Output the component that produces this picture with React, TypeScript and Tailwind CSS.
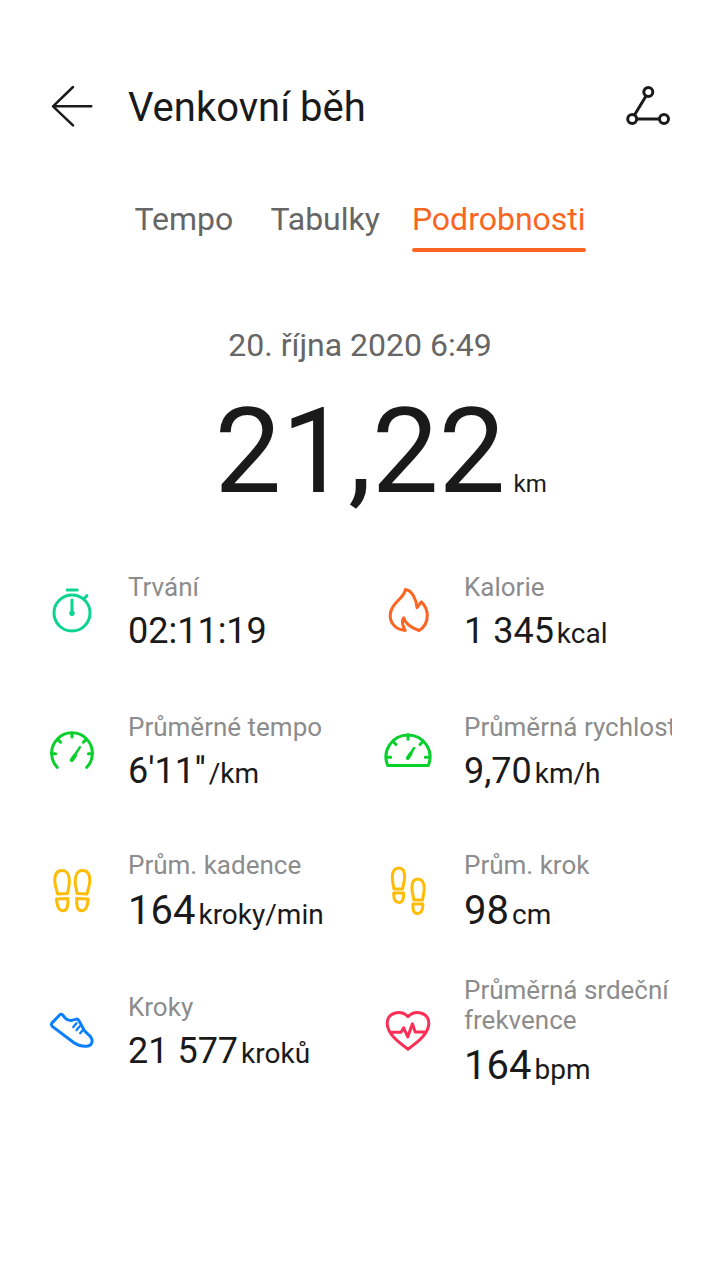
import React, { useState } from 'react';
import clsx from 'clsx';

interface IconProps {
  className?: string;
  children: React.ReactNode;
}

const Icon = ({ className, children }: IconProps) => (
  <svg
    viewBox="0 0 48 48"
    className={clsx('size-12 shrink-0 overflow-visible', className)}
    fill="none"
    stroke="currentColor"
    strokeWidth="3"
    strokeLinecap="round"
    strokeLinejoin="round"
    aria-hidden="true"
  >
    {children}
  </svg>
);

const StopwatchIcon = () => (
  <Icon className="text-[#0bd390]">
    <circle cx="24" cy="25" r="18" />
    <path d="M19.2 2h10M24 12v13M36.5 10.2l2.4-2.6" />
    <circle cx="24" cy="25.3" r="1.2" />
  </Icon>
);

const FlameIcon = () => (
  <Icon className="text-[#fb6522]">
    <path d="M21.3 1.6C21 10 6.2 15 6.2 27.5c0 8 6 14.4 15 14.9-2.7-4.8-4.2-8.9-1.6-12.6C21.6 36.5 28 40 35 42.5c6-3.5 8.5-10 8.3-16-.3-5.3-2.8-9.5-6-12.7L33 19.6C32.2 11 28 2.5 21.3 1.6z" />
  </Icon>
);

const PaceIcon = () => (
  <Icon className="text-[#07d02b]">
    <path d="M9.2 39.3A20.4 20.4 0 1 1 38.8 39.3" />
    <path d="M24 5.5V9M3.8 25.7h3.8M40.4 25.7h3.8M9.8 11.4l2.8 2.8M38.2 11.4l-2.8 2.8" />
    <path d="M31.9 19.2L23.7 32.2" strokeWidth="2.5" />
    <path d="M27 27.5L23.8 32" strokeWidth="4" />
  </Icon>
);

const SpeedIcon = () => (
  <Icon className="text-[#07d02b]">
    <path d="M3.8 37.6A22 22 0 1 1 44.2 37.6Z" />
    <path d="M24 6.5v4.8M2.5 29.3h4.2M41.3 29.3h4.2M8.7 13.2l3.3 3.3M39.3 13.2L36 16.5" />
    <path d="M30.1 20L23.8 30" strokeWidth="2.5" />
    <path d="M26.5 26L23.8 30" strokeWidth="4" />
  </Icon>
);

const CadenceIcon = () => (
  <Icon className="text-[#fdbc05]">
    <path d="M9.6 26C8.7 21 6.8 18.5 6.8 12.5 6.8 5.5 9.5 2.5 14 2.5s7.4 4 7.4 10.5c0 5.5-1.5 8.5-1.9 12.5z" />
    <path d="M8.5 31l11.4-.5c.3 7-.5 12.2-4.9 12.2S8.9 38.5 8.5 31z" />
    <path d="M39 26c.9-5 2.8-7.5 2.8-13.5 0-7-2.7-10-7.2-10S27.2 6.5 27.2 13c0 5.5 1.5 8.5 1.9 12.5z" />
    <path d="M40.1 31l-11.4-.5c-.3 7 .5 12.2 4.9 12.2s6.1-4.2 6.5-11.7z" />
  </Icon>
);

const StepIcon = () => (
  <Icon className="text-[#fdbc05]">
    <path d="M9.9 20.9C9.3 16 8.3 13.5 8.3 9.5 8.3 3 10.8 0 14.8 0s5.8 3.6 5.8 8.5c0 5-1.5 8-1.9 12.4z" />
    <path d="M9.6 24.9h10c.3 6-.9 9.6-4.6 9.6s-5.4-3.8-5.4-9.6z" />
    <path d="M38.6 32c.6-4.9 1.6-7.4 1.6-11.4 0-6.5-2.5-9.5-6.5-9.5s-5.8 3.6-5.8 8.5c0 5 1.5 8 1.9 12.4z" />
    <path d="M38.9 36h-10c-.3 6 .9 9.6 4.6 9.6s5.4-3.8 5.4-9.6z" />
  </Icon>
);

const ShoeIcon = () => (
  <Icon className="text-[#0a80ff]">
    <path d="M11.4 7.2L4.3 14.6c-1.4 1.5-1.2 2.7.3 4L25 34c4.5 3.4 9.5 4.6 14 4.300 5-.4 6.3-5.3 3.9-9-2-3-5-4.2-7-7.6l-4.8-8.8c-.8-1.6-2.1-2.1-3.7-1.5-4.1 1.5-7.8 1.3-10-1.2l-2.7-3.1c-1-1.1-2.2-1-3.3.1z" />
    <path d="M28.5 15.2L25.3 19M31.5 18.5L28.6 22M34.5 22.5L32.2 25.2" strokeWidth="2.4" />
  </Icon>
);

const HeartIcon = () => (
  <Icon className="text-[#fb2f57]">
    <path d="M24 41.2C16 35.3 3.2 26.5 3.2 15.3 3.2 5 16 1 24 8.6 32 1 44.8 5 44.8 15.3 44.8 26.5 32 35.3 24 41.2z" />
    <path d="M7 24.2h10l2.7-4.4 4.1 9.2 4.6-13.2 2.8 8.2H41" />
  </Icon>
);

const tabs = ['Tempo', 'Tabulky', 'Podrobnosti'];

const stats = [
  { label: 'Trvání', value: '02:11:19', unit: '', icon: <StopwatchIcon /> },
  { label: 'Kalorie', value: '1 345', unit: 'kcal', icon: <FlameIcon /> },
  { label: 'Průměrné tempo', value: "6'11''", unit: '/km', icon: <PaceIcon /> },
  { label: 'Průměrná rychlost', value: '9,70', unit: 'km/h', icon: <SpeedIcon /> },
  { label: 'Prům. kadence', value: '164', unit: 'kroky/min', icon: <CadenceIcon />, large: true },
  { label: 'Prům. krok', value: '98', unit: 'cm', icon: <StepIcon />, large: true },
  { label: 'Kroky', value: '21 577', unit: 'kroků', icon: <ShoeIcon /> },
  { label: 'Průměrná srdeční frekvence', value: '164', unit: 'bpm', icon: <HeartIcon />, large: true, wrap: true },
];

export default function App() {
  const [active, setActive] = useState('Podrobnosti');

  return (
    <div className="min-h-screen bg-white px-12 pt-[84px] pb-12 font-['Roboto',sans-serif] text-[#1a1a1a]">
      <header className="flex items-center gap-8">
        <button type="button" aria-label="Zpět" className="shrink-0">
          <Icon>
            <path d="M25 3L5 22.3 25 41.3M5 22.3H43.3" strokeWidth="2.5" />
          </Icon>
        </button>
        <h1 className="flex-1 text-[40px] leading-[48px]">Venkovní běh</h1>
        <button type="button" aria-label="Sdílet trasu" className="shrink-0">
          <Icon>
            <circle cx="24.3" cy="8" r="4.5" />
            <circle cx="8.2" cy="35" r="4.5" />
            <circle cx="40" cy="35" r="4.5" />
            <path d="M22 12L10.5 31M13 35h22" />
          </Icon>
        </button>
      </header>

      <nav className="mt-[67px] flex justify-center gap-8">
        {tabs.map((tab) => (
          <button
            key={tab}
            type="button"
            onClick={() => setActive(tab)}
            className={clsx(
              'flex min-w-[104px] flex-col items-start text-[32px] leading-10',
              tab === active ? 'text-[#fb6522]' : 'text-[#666666]'
            )}
          >
            {tab}
            <span className={clsx('mt-[9px] h-1 w-full rounded-full', tab === active && 'bg-[#fb6522]')} />
          </button>
        ))}
      </nav>

      <section className="mt-[73px]">
        <p className="text-center text-[32px] leading-10 text-[#666666]">20. října 2020 6:49</p>
        <div className="mt-[27px] grid grid-cols-[1fr_auto_1fr] items-baseline">
          <span className="col-start-2 text-[119px] leading-[120px]">21,22</span>
          <span className="ml-2 text-2xl">km</span>
        </div>
      </section>

      <dl className="mt-[30px] grid auto-rows-[140px] grid-cols-2 gap-x-12">
        {stats.map((stat) => (
          <div key={stat.label} className="flex items-center gap-8">
            {stat.icon}
            <div className="min-w-0 flex-1">
              <dt
                className={clsx(
                  'overflow-hidden text-[26px] leading-[30px] text-[#8c8c8c]',
                  !stat.wrap && 'whitespace-nowrap'
                )}
              >
                {stat.label}
              </dt>
              <dd
                className={clsx(
                  'mt-2 flex items-baseline gap-[3px] whitespace-nowrap',
                  stat.large ? 'text-[40px] leading-[46px]' : 'text-[36px] leading-[42px]'
                )}
              >
                {stat.value}
                {stat.unit && <span className="text-[28px] leading-8">{stat.unit}</span>}
              </dd>
            </div>
          </div>
        ))}
      </dl>
    </div>
  );
}
